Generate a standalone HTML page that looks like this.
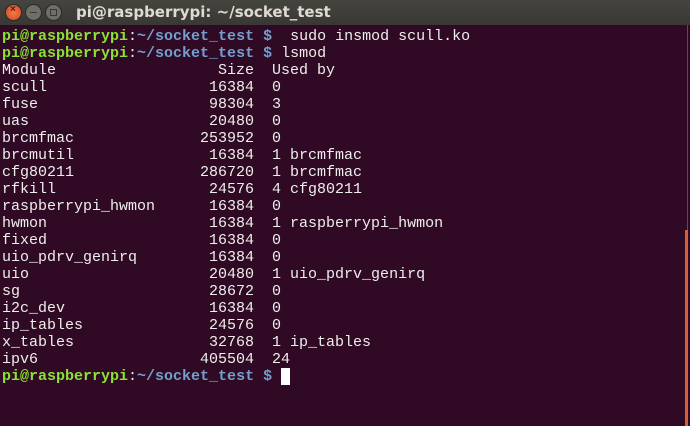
<!DOCTYPE html>
<html><head><meta charset="utf-8"><style>
html,body{margin:0;padding:0;width:690px;height:426px;overflow:hidden;background:#300a24}
.tb{position:absolute;left:0;top:0;width:690px;height:25px;background:linear-gradient(#45443f,#393834);}
.tt{position:absolute;left:76px;top:3px;font:bold 15px "DejaVu Sans","Liberation Sans",sans-serif;color:#dfdbd2}
.b{position:absolute;top:5px;width:15px;height:15px;border-radius:50%;}
.term{position:absolute;left:2px;top:28px;margin:0;font:15px/17px "Liberation Mono",monospace;color:#eeeeec;white-space:pre}
.g{color:#8ae234;font-weight:bold}.u{color:#729fcf;font-weight:bold}
.cur{background:#fff;display:inline-block;width:9px;height:17px;vertical-align:top}
</style></head><body>
<div class="tb"></div>
<div class="b" style="left:6px;background:radial-gradient(#f07a4a,#d9471e);box-shadow:0 0 0 1px #2a2a28"><span style="position:absolute;left:4px;top:-1px;font:bold 10px sans-serif;color:#5a1a08">×</span></div>
<div class="b" style="left:26px;background:#6f6e69;box-shadow:0 0 0 1px #2a2a28"><span style="position:absolute;left:4px;top:7px;width:7px;height:1px;background:#3a3935"></span></div>
<div class="b" style="left:46px;background:#6f6e69;box-shadow:0 0 0 1px #2a2a28"><span style="position:absolute;left:4px;top:4px;width:5px;height:5px;border:1px solid #3a3935"></span></div>
<div class="tt">pi@raspberrypi: ~/socket_test</div>
<div style="position:absolute;left:687px;top:25px;width:1px;height:205px;background:#5a4a55"></div>
<div style="position:absolute;left:685px;top:230px;width:3px;height:196px;background:#d3603a"></div>
<pre class="term"><span class="g">pi@raspberrypi</span>:<span class="u">~/socket_test $</span>  sudo insmod scull.ko
<span class="g">pi@raspberrypi</span>:<span class="u">~/socket_test $</span> lsmod
Module                  Size  Used by
scull                  16384  0
fuse                   98304  3
uas                    20480  0
brcmfmac              253952  0
brcmutil               16384  1 brcmfmac
cfg80211              286720  1 brcmfmac
rfkill                 24576  4 cfg80211
raspberrypi_hwmon      16384  0
hwmon                  16384  1 raspberrypi_hwmon
fixed                  16384  0
uio_pdrv_genirq        16384  0
uio                    20480  1 uio_pdrv_genirq
sg                     28672  0
i2c_dev                16384  0
ip_tables              24576  0
x_tables               32768  1 ip_tables
ipv6                  405504  24
<span class="g">pi@raspberrypi</span>:<span class="u">~/socket_test $</span> <span class="cur"></span></pre>
</body></html>
